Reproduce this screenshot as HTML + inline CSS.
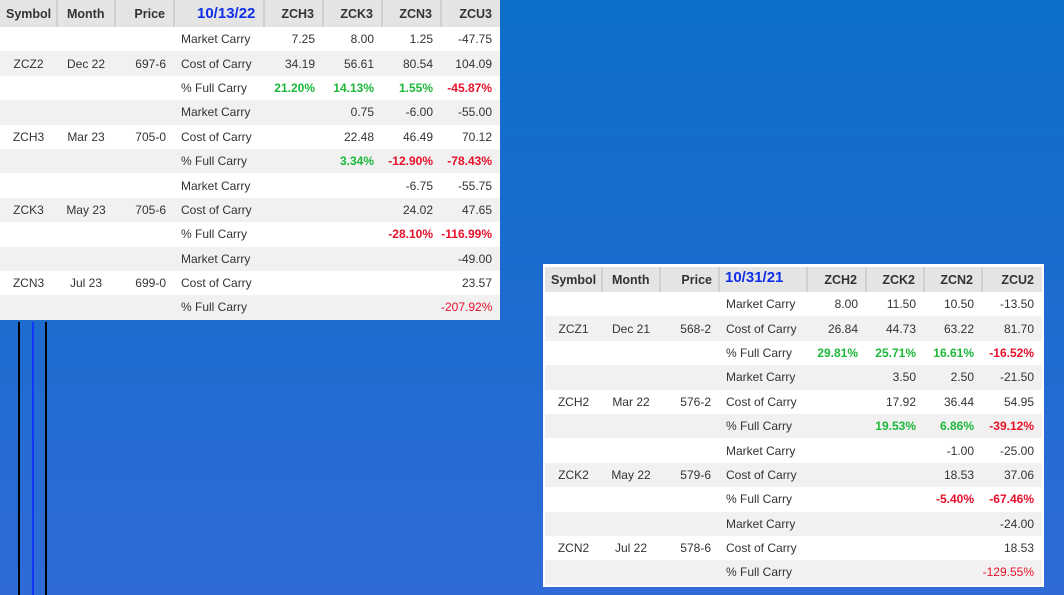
<!DOCTYPE html>
<html><head><style>
*{margin:0;padding:0;box-sizing:border-box}
body{width:1064px;height:595px;overflow:hidden;position:relative;background:linear-gradient(180deg,#0b6fc8 0%,#1a6ccd 40%,#2e6bd6 100%);font-family:"Liberation Sans",sans-serif;font-size:12px;color:#333}
.vl{position:absolute;top:322px;height:273px;width:2px}
table{position:absolute;border-collapse:collapse;table-layout:fixed;background:#fff}
td,th{height:24.4px;padding:0 8px 0 0;white-space:nowrap;overflow:visible}
th{background:#e4e4e4;font-weight:bold;text-align:right;border-right:2px solid #d0d0d0;color:#333;font-size:12.5px}
th.l{text-align:left;padding-left:6px}
th.d{color:#1030e8;font-size:15px;text-align:left;padding-left:22px}
td{text-align:right}
td.c{text-align:center;padding:0}
td.lab{text-align:left;padding-left:7px}
tr.g td{background:#f1f1f1}
.gr{color:#1db83a;font-weight:bold}
.rd{color:#e8102a;font-weight:bold}
</style></head><body>
<div class="vl" style="left:18px;background:#000"></div>
<div class="vl" style="left:32px;background:#1035ff"></div>
<div class="vl" style="left:45px;background:#000"></div>

<table style="left:0;top:0;width:500px">
<colgroup><col style="width:57px"><col style="width:58px"><col style="width:59px"><col style="width:90px"><col style="width:59px"><col style="width:59px"><col style="width:59px"><col style="width:59px"></colgroup>
<tr style="height:27px"><th class="l" style="height:27px">Symbol</th><th class="l" style="padding-left:9px">Month</th><th>Price</th><th class="d">10/13/22</th><th>ZCH3</th><th>ZCK3</th><th>ZCN3</th><th style="border-right:none">ZCU3</th></tr>
<tr><td></td><td></td><td></td><td class="lab">Market Carry</td><td>7.25</td><td>8.00</td><td>1.25</td><td>-47.75</td></tr>
<tr class="g"><td class="c">ZCZ2</td><td class="c">Dec 22</td><td>697-6</td><td class="lab">Cost of Carry</td><td>34.19</td><td>56.61</td><td>80.54</td><td>104.09</td></tr>
<tr><td></td><td></td><td></td><td class="lab">% Full Carry</td><td class="gr">21.20%</td><td class="gr">14.13%</td><td class="gr">1.55%</td><td class="rd">-45.87%</td></tr>
<tr class="g"><td></td><td></td><td></td><td class="lab">Market Carry</td><td></td><td>0.75</td><td>-6.00</td><td>-55.00</td></tr>
<tr><td class="c">ZCH3</td><td class="c">Mar 23</td><td>705-0</td><td class="lab">Cost of Carry</td><td></td><td>22.48</td><td>46.49</td><td>70.12</td></tr>
<tr class="g"><td></td><td></td><td></td><td class="lab">% Full Carry</td><td></td><td class="gr">3.34%</td><td class="rd">-12.90%</td><td class="rd">-78.43%</td></tr>
<tr><td></td><td></td><td></td><td class="lab">Market Carry</td><td></td><td></td><td>-6.75</td><td>-55.75</td></tr>
<tr class="g"><td class="c">ZCK3</td><td class="c">May 23</td><td>705-6</td><td class="lab">Cost of Carry</td><td></td><td></td><td>24.02</td><td>47.65</td></tr>
<tr><td></td><td></td><td></td><td class="lab">% Full Carry</td><td></td><td></td><td class="rd">-28.10%</td><td class="rd">-116.99%</td></tr>
<tr class="g"><td></td><td></td><td></td><td class="lab">Market Carry</td><td></td><td></td><td></td><td>-49.00</td></tr>
<tr><td class="c">ZCN3</td><td class="c">Jul 23</td><td>699-0</td><td class="lab">Cost of Carry</td><td></td><td></td><td></td><td>23.57</td></tr>
<tr class="g"><td></td><td></td><td></td><td class="lab">% Full Carry</td><td></td><td></td><td></td><td class="rd" style="font-weight:normal">-207.92%</td></tr>
</table>

<div style="position:absolute;left:543px;top:264px;width:501px;height:323px;background:#fff"></div>
<table style="left:545px;top:267px;width:497px">
<colgroup><col style="width:57px"><col style="width:58px"><col style="width:59px"><col style="width:88px"><col style="width:59px"><col style="width:58px"><col style="width:58px"><col style="width:60px"></colgroup>
<tr><th class="l" style="height:25px">Symbol</th><th class="l" style="padding-left:9px">Month</th><th style="padding-right:6px">Price</th><th class="d" style="padding-left:5px;vertical-align:top;padding-top:2px">10/31/21</th><th>ZCH2</th><th>ZCK2</th><th>ZCN2</th><th style="border-right:none">ZCU2</th></tr>
<tr><td></td><td></td><td></td><td class="lab">Market Carry</td><td>8.00</td><td>11.50</td><td>10.50</td><td>-13.50</td></tr>
<tr class="g"><td class="c">ZCZ1</td><td class="c">Dec 21</td><td>568-2</td><td class="lab">Cost of Carry</td><td>26.84</td><td>44.73</td><td>63.22</td><td>81.70</td></tr>
<tr><td></td><td></td><td></td><td class="lab">% Full Carry</td><td class="gr">29.81%</td><td class="gr">25.71%</td><td class="gr">16.61%</td><td class="rd">-16.52%</td></tr>
<tr class="g"><td></td><td></td><td></td><td class="lab">Market Carry</td><td></td><td>3.50</td><td>2.50</td><td>-21.50</td></tr>
<tr><td class="c">ZCH2</td><td class="c">Mar 22</td><td>576-2</td><td class="lab">Cost of Carry</td><td></td><td>17.92</td><td>36.44</td><td>54.95</td></tr>
<tr class="g"><td></td><td></td><td></td><td class="lab">% Full Carry</td><td></td><td class="gr">19.53%</td><td class="gr">6.86%</td><td class="rd">-39.12%</td></tr>
<tr><td></td><td></td><td></td><td class="lab">Market Carry</td><td></td><td></td><td>-1.00</td><td>-25.00</td></tr>
<tr class="g"><td class="c">ZCK2</td><td class="c">May 22</td><td>579-6</td><td class="lab">Cost of Carry</td><td></td><td></td><td>18.53</td><td>37.06</td></tr>
<tr><td></td><td></td><td></td><td class="lab">% Full Carry</td><td></td><td></td><td class="rd">-5.40%</td><td class="rd">-67.46%</td></tr>
<tr class="g"><td></td><td></td><td></td><td class="lab">Market Carry</td><td></td><td></td><td></td><td>-24.00</td></tr>
<tr><td class="c">ZCN2</td><td class="c">Jul 22</td><td>578-6</td><td class="lab">Cost of Carry</td><td></td><td></td><td></td><td>18.53</td></tr>
<tr class="g"><td></td><td></td><td></td><td class="lab">% Full Carry</td><td></td><td></td><td></td><td class="rd" style="font-weight:normal">-129.55%</td></tr>
</table>
</body></html>
